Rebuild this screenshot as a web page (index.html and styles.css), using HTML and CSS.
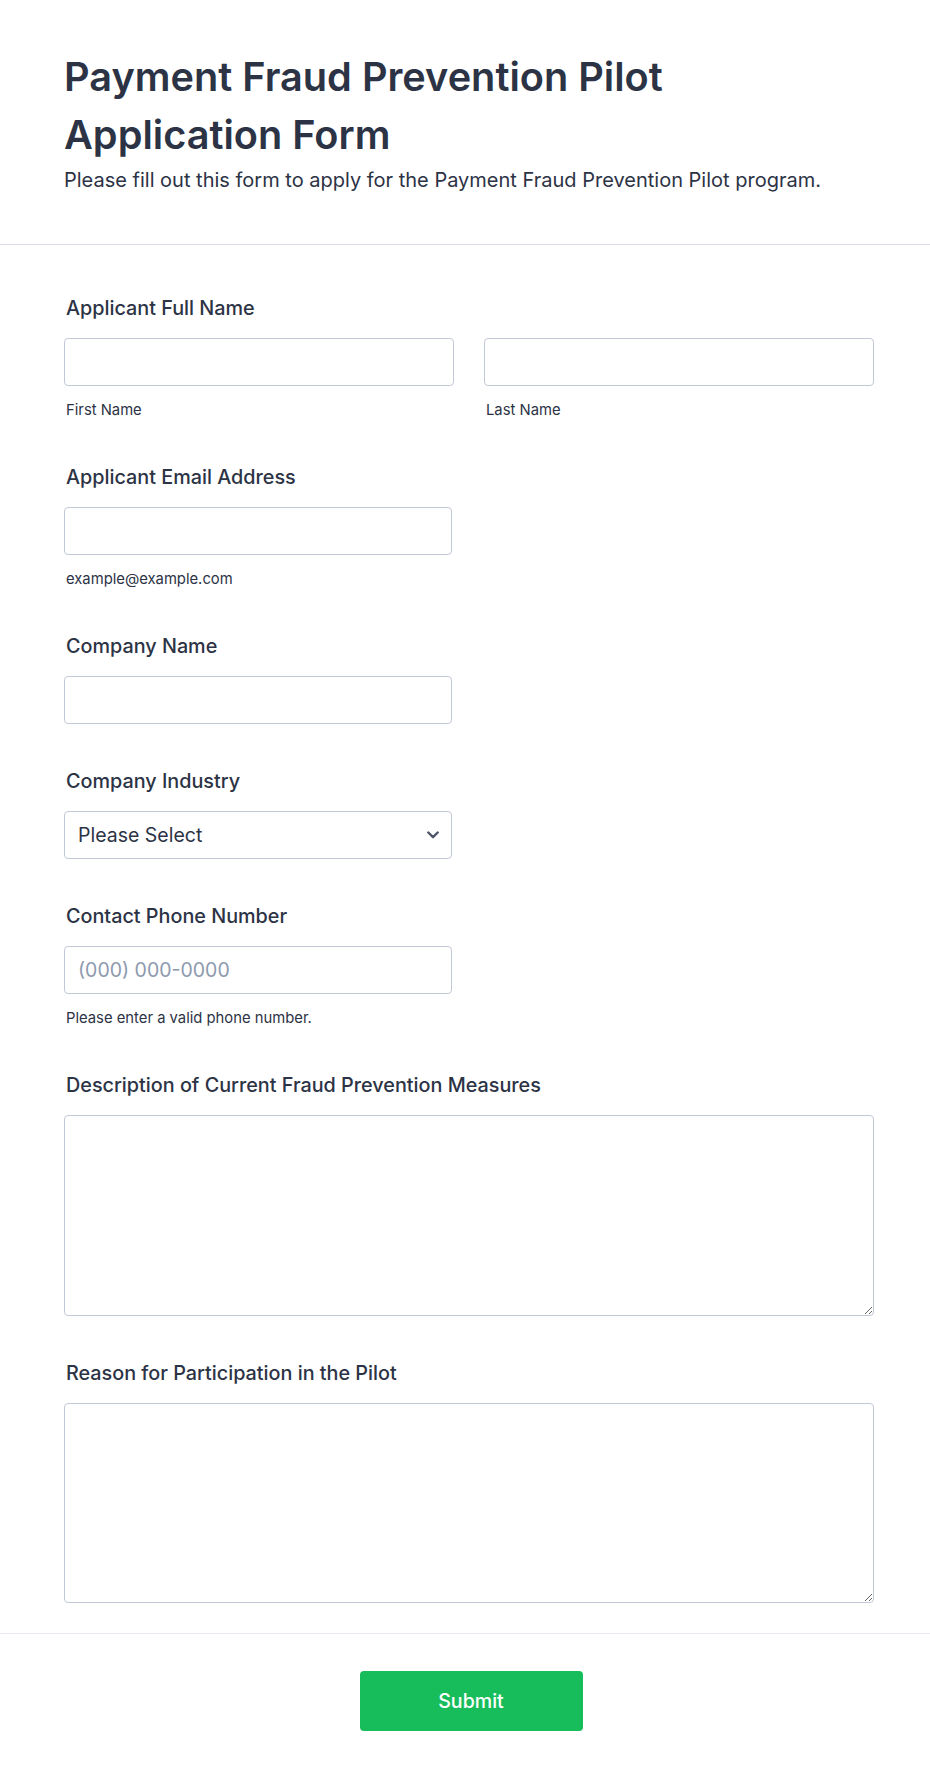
FILE: index.html
```html
<!DOCTYPE html>
<html lang="en">
<head>
<meta charset="utf-8">
<title>Payment Fraud Prevention Pilot Application Form</title>
<link rel="stylesheet" href="styles.css">
</head>
<body>
<div class="form">
  <header class="form-header">
    <h1 class="title">Payment Fraud Prevention Pilot Application Form</h1>
    <p class="subtitle">Please fill out this form to apply for the Payment Fraud Prevention Pilot program.</p>
  </header>

  <main class="form-body">
    <div class="field">
      <label class="label">Applicant Full Name</label>
      <div class="name-row">
        <div class="name-col">
          <input class="input" type="text">
          <span class="sublabel">First Name</span>
        </div>
        <div class="name-col">
          <input class="input" type="text">
          <span class="sublabel">Last Name</span>
        </div>
      </div>
    </div>

    <div class="field">
      <label class="label">Applicant Email Address</label>
      <input class="input half" type="email">
      <span class="sublabel">example@example.com</span>
    </div>

    <div class="field">
      <label class="label">Company Name</label>
      <input class="input half" type="text">
    </div>

    <div class="field">
      <label class="label">Company Industry</label>
      <div class="select-wrap half">
        <select class="select">
          <option>Please Select</option>
        </select>
        <svg class="chevron" width="12" height="8" viewBox="0 0 12 8" aria-hidden="true">
          <path d="M1.3 1.5 L6 6.2 L10.7 1.5" fill="none" stroke="#4f5668" stroke-width="2.4" stroke-linecap="round" stroke-linejoin="round"/>
        </svg>
      </div>
    </div>

    <div class="field">
      <label class="label">Contact Phone Number</label>
      <input class="input half" type="tel" placeholder="(000) 000-0000">
      <span class="sublabel">Please enter a valid phone number.</span>
    </div>

    <div class="field">
      <label class="label">Description of Current Fraud Prevention Measures</label>
      <textarea class="textarea tall1"></textarea>
    </div>

    <div class="field">
      <label class="label">Reason for Participation in the Pilot</label>
      <textarea class="textarea tall2"></textarea>
    </div>
  </main>

  <footer class="form-footer">
    <button class="submit" type="button">Submit</button>
  </footer>
</div>
</body>
</html>
```

FILE: styles.css
```css
* {
  box-sizing: border-box;
}

html, body {
  margin: 0;
  padding: 0;
  background: #ffffff;
}

body {
  font-family: Inter, "Noto Sans", "Liberation Sans", sans-serif;
  color: #2c3345;
}

.form {
  width: 930px;
  min-height: 1781px;
  background: #ffffff;
}

.form-header {
  padding: 48px 56px 50px 64px;
  border-bottom: 1px solid #dcdce6;
}

.title {
  margin: 0;
  font-size: 39.7px;
  line-height: 58px;
  font-weight: 600;
  color: #2c3345;
  max-width: 640px;
}

.subtitle {
  margin: 3px 0 0 0;
  font-size: 20px;
  line-height: 27px;
  font-weight: 400;
  color: #2c3345;
}

.form-body {
  padding: 51px 56px 30px 64px;
  display: flex;
  flex-direction: column;
  gap: 45px;
}

.field {
  display: flex;
  flex-direction: column;
}

.label {
  display: block;
  font-size: 19.8px;
  line-height: 24px;
  font-weight: 500;
  padding-left: 2px;
  margin-bottom: 18px;
  color: #2c3345;
}

.name-row {
  display: grid;
  grid-template-columns: 1fr 1fr;
  column-gap: 30px;
}

.name-col {
  display: flex;
  flex-direction: column;
}

.input,
.select,
.textarea {
  display: block;
  width: 100%;
  height: 48px;
  border: 1px solid #c3c8d6;
  border-radius: 4px;
  background: #ffffff;
  font-family: Inter, "Noto Sans", "Liberation Sans", sans-serif;
  font-size: 19.5px;
  color: #2c3345;
  padding: 0 13px;
  outline: none;
}

.half {
  width: 388px;
}

.input::placeholder {
  color: #8d99ae;
}

.sublabel {
  display: block;
  margin-top: 14px;
  padding-left: 2px;
  font-size: 14.8px;
  line-height: 20px;
  color: #2c3345;
}

.select-wrap {
  position: relative;
}

.select {
  appearance: none;
  -webkit-appearance: none;
  cursor: pointer;
}

.chevron {
  position: absolute;
  right: 13px;
  top: 20px;
  pointer-events: none;
}

.textarea {
  padding: 10px 13px;
  resize: vertical;
}

.tall1 {
  height: 201px;
}

.tall2 {
  height: 200px;
}

.form-footer {
  border-top: 1px solid #e8e8f0;
  padding: 37px 52px 50px 64px;
  display: flex;
  justify-content: center;
}

.submit {
  width: 223px;
  height: 60px;
  border: none;
  border-radius: 4px;
  background: #18bd5b;
  color: #ffffff;
  font-family: Inter, "Noto Sans", "Liberation Sans", sans-serif;
  font-size: 19.6px;
  font-weight: 500;
  cursor: pointer;
}
```
